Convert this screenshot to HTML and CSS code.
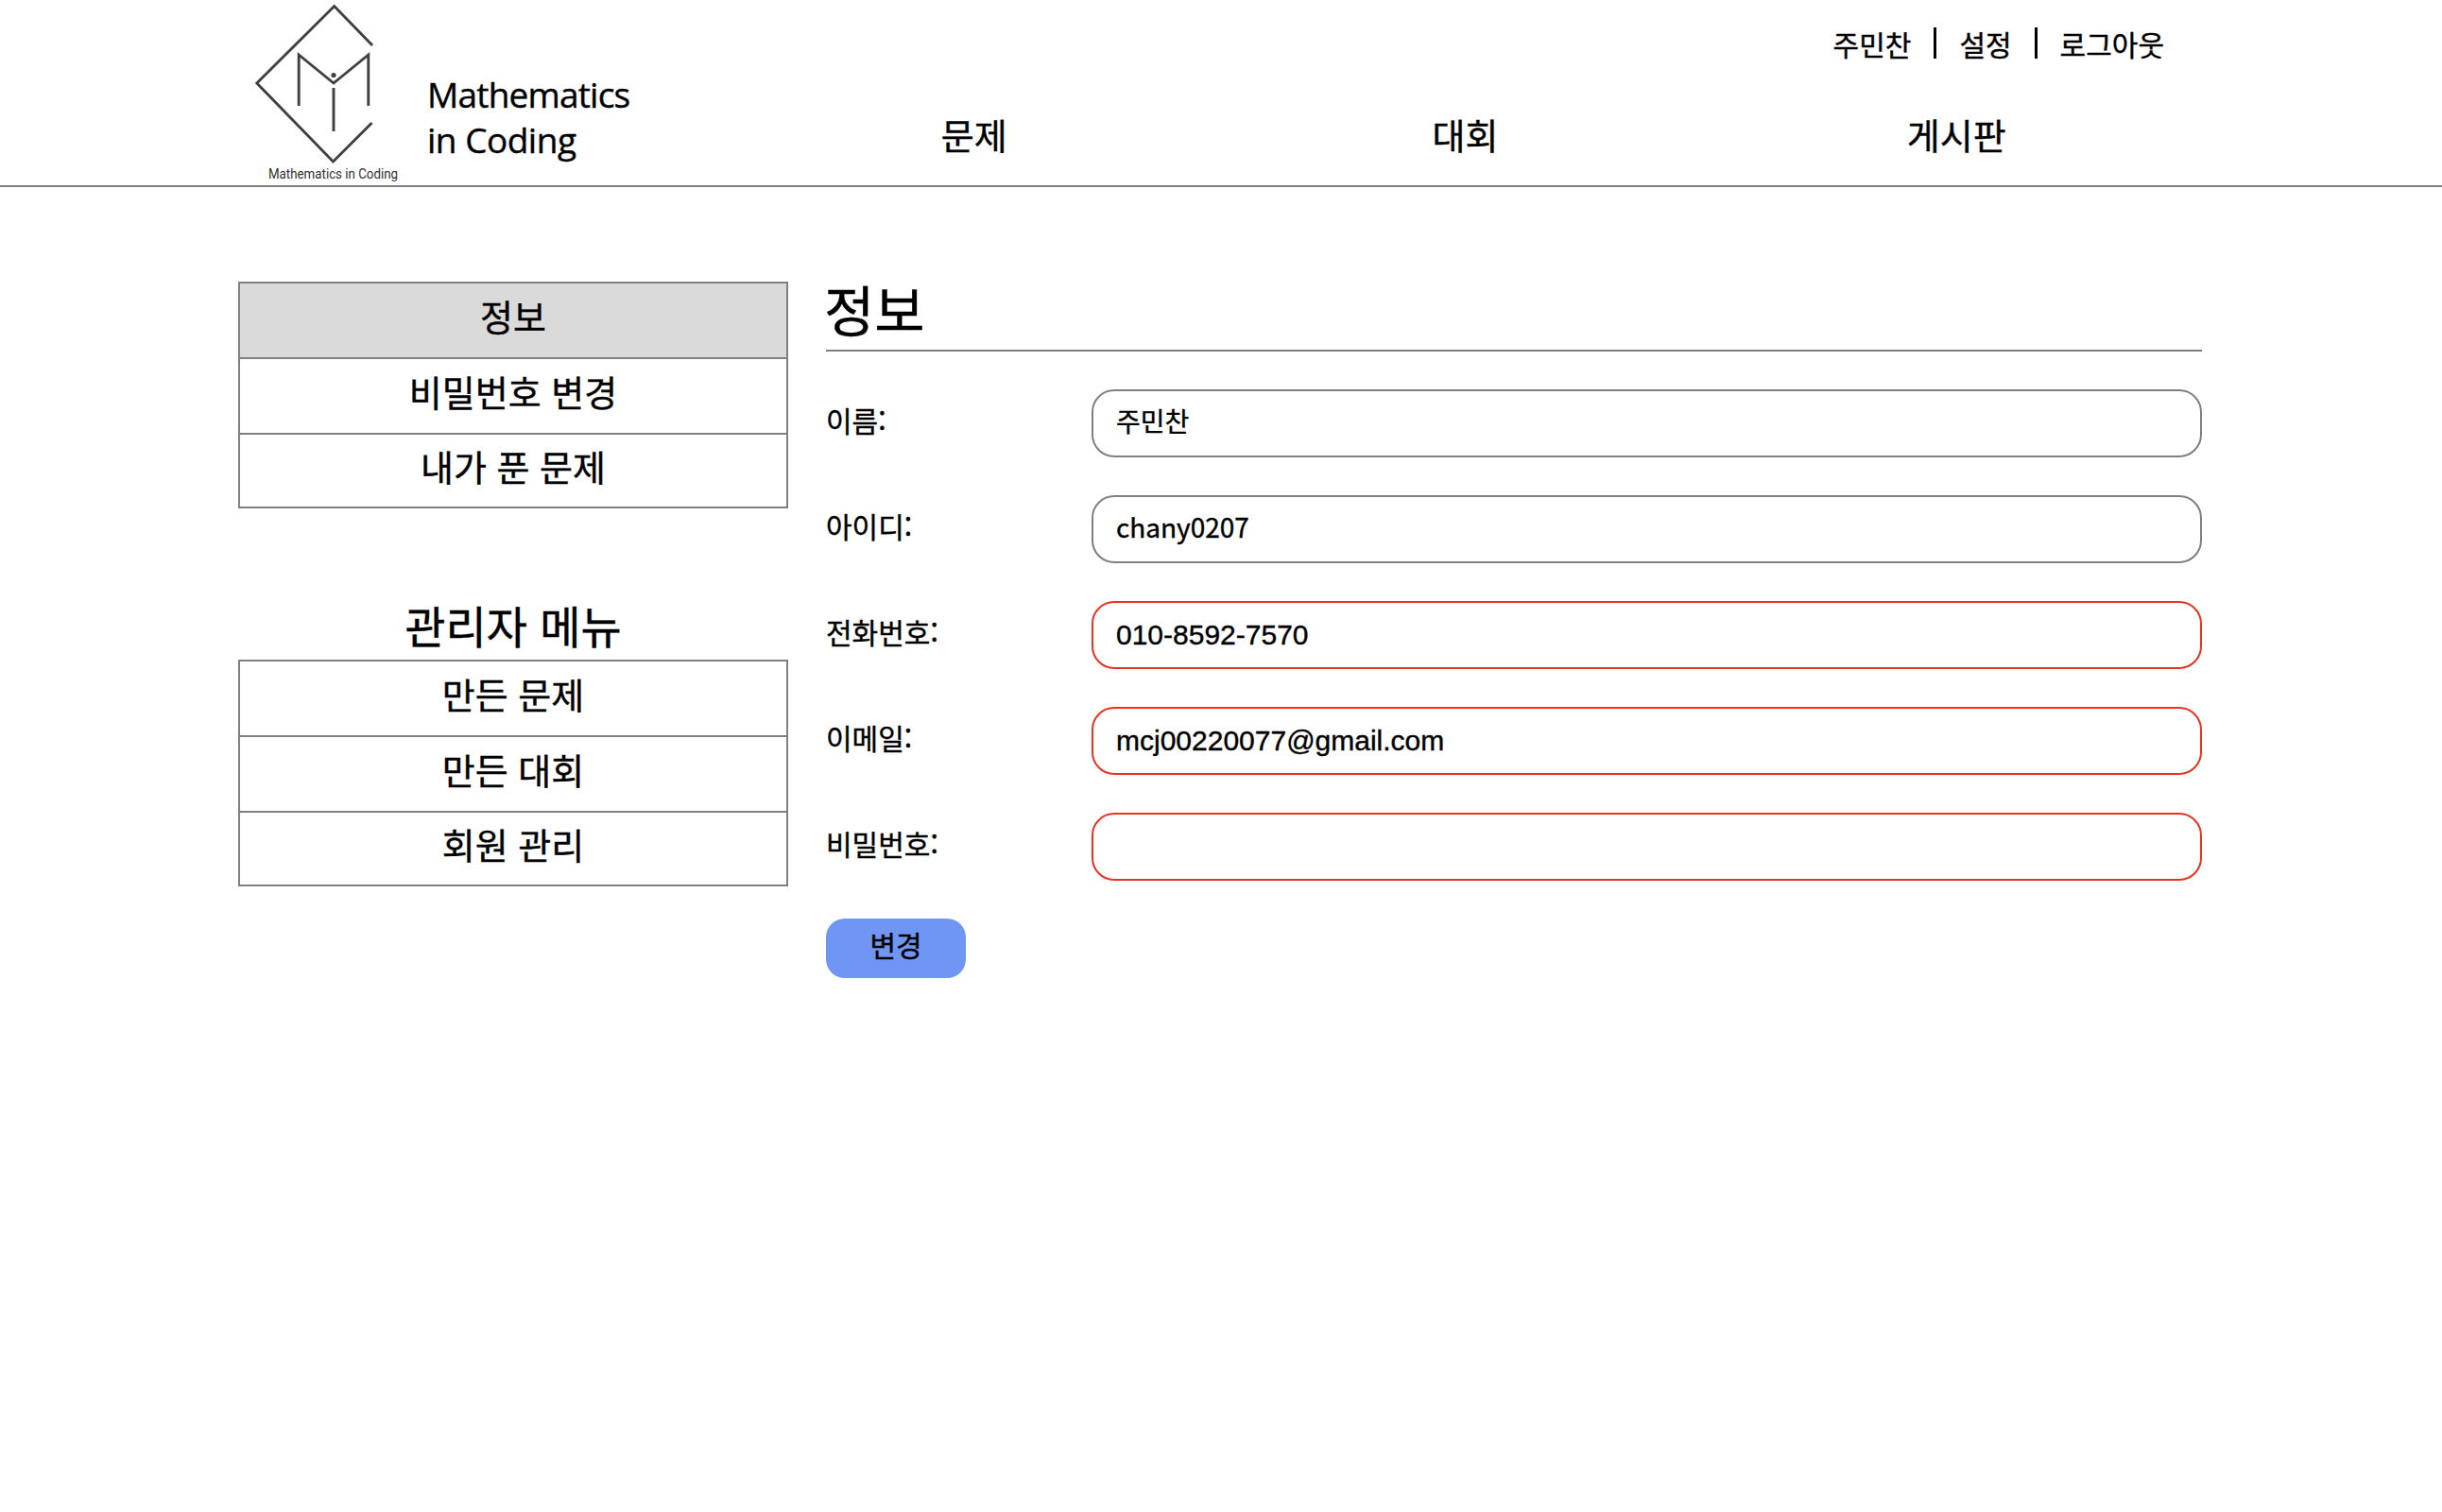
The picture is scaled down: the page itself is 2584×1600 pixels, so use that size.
FILE: index.html
```html
<!DOCTYPE html>
<html lang="ko">
<head>
<meta charset="utf-8">
<title>Mathematics in Coding</title>
<link rel="stylesheet" href="styles.css">
</head>
<body>
<header class="header">
  <div class="header-inner">
    <a class="brand">
      <svg class="logo" viewBox="250 0 190 196" width="190" height="196">
        <g fill="none" stroke="#404040" stroke-width="2.9">
          <path d="M394 48 353.7 6.5 271.8 88 352.5 171 393.5 130"/>
          <path d="M316.2 112V58L353 88 389.8 58V112M353 93V139"/>
        </g>
        <circle cx="353" cy="79.5" r="2.6" fill="#404040"/>
        <text class="logo-caption" x="284" y="189" textLength="137" lengthAdjust="spacingAndGlyphs">Mathematics in Coding</text>
      </svg>
      <span class="brand-name"><span class="brand-first">Mathematics</span><br>in Coding</span>
    </a>
    <div class="header-right">
      <div class="user-links"><a>주민찬</a><i class="divider"></i><a>설정</a><i class="divider"></i><a>로그아웃</a></div>
      <nav class="nav"><a>문제</a><a>대회</a><a>게시판</a></nav>
    </div>
  </div>
</header>
<div class="page">
  <aside class="sidebar">
    <ul class="menu">
      <li class="active">정보</li>
      <li>비밀번호 변경</li>
      <li>내가 푼 문제</li>
    </ul>
    <h2 class="menu-title">관리자 메뉴</h2>
    <ul class="menu">
      <li>만든 문제</li>
      <li>만든 대회</li>
      <li>회원 관리</li>
    </ul>
  </aside>
  <main class="content">
    <h1 class="title">정보</h1>
    <form class="form">
      <div class="row"><label>이름:</label><div class="field">주민찬</div></div>
      <div class="row"><label>아이디:</label><div class="field">chany0207</div></div>
      <div class="row"><label>전화번호:</label><input class="input" type="text" value="010-8592-7570"></div>
      <div class="row"><label>이메일:</label><input class="input" type="text" value="mcj00220077@gmail.com"></div>
      <div class="row"><label>비밀번호:</label><input class="input" type="password"></div>
      <button class="submit" type="button">변경</button>
    </form>
  </main>
</div>
</body>
</html>
```
FILE: styles.css
```css
* { box-sizing: border-box; }
body {
  margin: 0;
  background: #fff;
  color: #000;
  font-family: "Noto Sans CJK KR", sans-serif;
  font-size: 38px;
  -webkit-text-stroke: 0.4px currentColor;
}
.header { height: 198px; border-bottom: 2px solid #808080; }
.header-inner { display: flex; width: 2080px; margin-left: 250px; }
.brand { display: flex; width: 520px; }
.logo { flex: none; }
.logo-caption { font-family: Roboto, sans-serif; font-size: 14.5px; fill: #303030; }
.brand-name {
  padding: 76px 0 0 12px;
  font-family: "Open Sans", sans-serif;
  font-size: 37px;
  line-height: 48px;
  letter-spacing: -0.5px;
  white-space: nowrap;
}
.brand-first { letter-spacing: -0.8px; }
.header-right { flex: 1; }
.user-links {
  display: flex;
  justify-content: flex-end;
  height: 96px;
  padding: 24px 40px 0 0;
  font-size: 30px;
  line-height: 44px;
}
.divider { width: 3px; height: 33px; margin: 5px 24px 0; background: #000; }
.nav {
  display: grid;
  grid-template-columns: repeat(3, 1fr);
  padding-left: 1px;
  text-align: center;
  line-height: 92px;
}
.page { display: flex; gap: 40px; width: 2078px; margin: 100px 0 0 252px; }
.sidebar { width: 582px; }
.menu { margin: 0; padding: 0; list-style: none; border: 2px solid #808080; text-align: center; }
.menu li { height: 80px; line-height: 68px; border-bottom: 2px solid #808080; }
.menu li:last-child { height: 76px; line-height: 66px; border-bottom: 0; }
.menu .active { background: #dadada; }
.menu-title {
  height: 160px;
  margin: 0;
  padding-top: 90px;
  font-size: 47px;
  font-weight: 400;
  line-height: 66px;
  text-align: center;
}
.content { flex: 1; }
.title {
  height: 74px;
  margin: 0;
  border-bottom: 2px solid #808080;
  font-size: 58px;
  font-weight: 400;
  line-height: 56px;
  text-indent: -2px;
}
.form { display: flex; flex-direction: column; gap: 40px; padding-top: 40px; }
.row { display: grid; grid-template-columns: 281px 1fr; height: 72px; font-size: 30px; line-height: 64px; }
.field, .input {
  width: 100%;
  height: 72px;
  padding: 0 24px;
  border: 2px solid #808080;
  border-radius: 24px;
  background: #fff;
}
.field { font-size: 28px; line-height: 62px; }
.input { border-color: #ea3323; font: 30px "Liberation Sans", Arial, sans-serif; color: #000; outline: 0; }
.submit {
  width: 148px;
  height: 63px;
  padding: 0 0 8px;
  border: 0;
  border-radius: 20px;
  background: #7096f5;
  color: #000;
  font: 30px/55px "Noto Sans CJK KR", sans-serif;
}
```
